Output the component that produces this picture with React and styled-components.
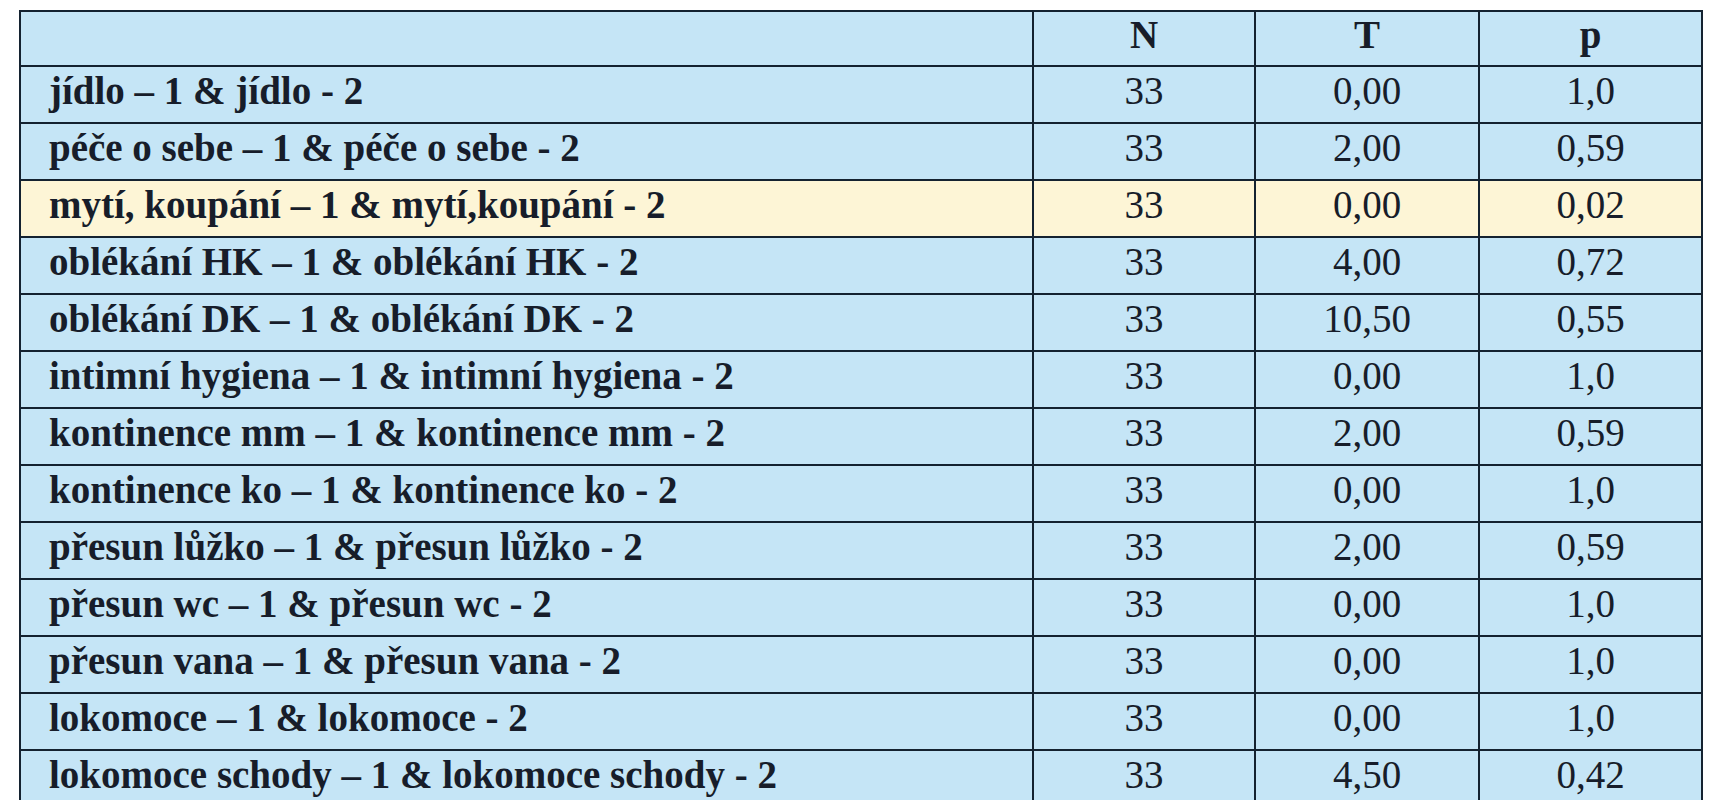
import React from "react"
import styled, { createGlobalStyle } from "styled-components"

const GlobalStyle = createGlobalStyle`
  body {
    margin: 0;
    background: #ffffff;
    overflow: hidden;
  }
`

const Page = styled.div`
  padding: 10px 0 0 19px;
`

const Table = styled.table`
  border-collapse: collapse;
  table-layout: fixed;
  width: 1682px;
  font-family: "Liberation Serif", "Times New Roman", serif;
  color: #171d2a;
`

const Row = styled.tr`
  height: ${props => (props.$head ? "55px" : "57px")};
  background: ${props => (props.$highlight ? "#fdf5d6" : "#c5e5f6")};
`

const Cell = styled.td`
  border: 2px solid #142230;
  padding: ${props => (props.$center ? "0 0 9px" : "0 0 9px 28px")};
  font-size: 39px;
  line-height: 1;
  font-weight: ${props => (props.$bold ? 700 : 400)};
  text-align: ${props => (props.$center ? "center" : "left")};
  white-space: nowrap;
`

const rows = [
  ["jídlo – 1 & jídlo - 2", "33", "0,00", "1,0"],
  ["péče o sebe – 1 & péče o sebe - 2", "33", "2,00", "0,59"],
  ["mytí, koupání – 1 & mytí,koupání - 2", "33", "0,00", "0,02", true],
  ["oblékání HK – 1 & oblékání HK - 2", "33", "4,00", "0,72"],
  ["oblékání DK – 1 & oblékání DK - 2", "33", "10,50", "0,55"],
  ["intimní hygiena – 1 & intimní hygiena - 2", "33", "0,00", "1,0"],
  ["kontinence mm – 1 & kontinence mm - 2", "33", "2,00", "0,59"],
  ["kontinence ko – 1 & kontinence ko - 2", "33", "0,00", "1,0"],
  ["přesun lůžko – 1 & přesun lůžko - 2", "33", "2,00", "0,59"],
  ["přesun wc – 1 & přesun wc - 2", "33", "0,00", "1,0"],
  ["přesun vana – 1 & přesun vana - 2", "33", "0,00", "1,0"],
  ["lokomoce – 1 & lokomoce - 2", "33", "0,00", "1,0"],
  ["lokomoce schody – 1 & lokomoce schody - 2", "33", "4,50", "0,42"],
]

const App = () => (
  <>
    <GlobalStyle />
    <Page>
      <Table>
        <colgroup>
          <col style={{ width: "1013px" }} />
          <col style={{ width: "222px" }} />
          <col style={{ width: "224px" }} />
          <col style={{ width: "223px" }} />
        </colgroup>
        <thead>
          <Row $head>
            <Cell />
            <Cell $center $bold>N</Cell>
            <Cell $center $bold>T</Cell>
            <Cell $center $bold>p</Cell>
          </Row>
        </thead>
        <tbody>
          {rows.map(([label, n, t, p, hl]) => (
            <Row key={label} $highlight={hl}>
              <Cell $bold>{label}</Cell>
              <Cell $center>{n}</Cell>
              <Cell $center>{t}</Cell>
              <Cell $center>{p}</Cell>
            </Row>
          ))}
        </tbody>
      </Table>
    </Page>
  </>
)

export default App
